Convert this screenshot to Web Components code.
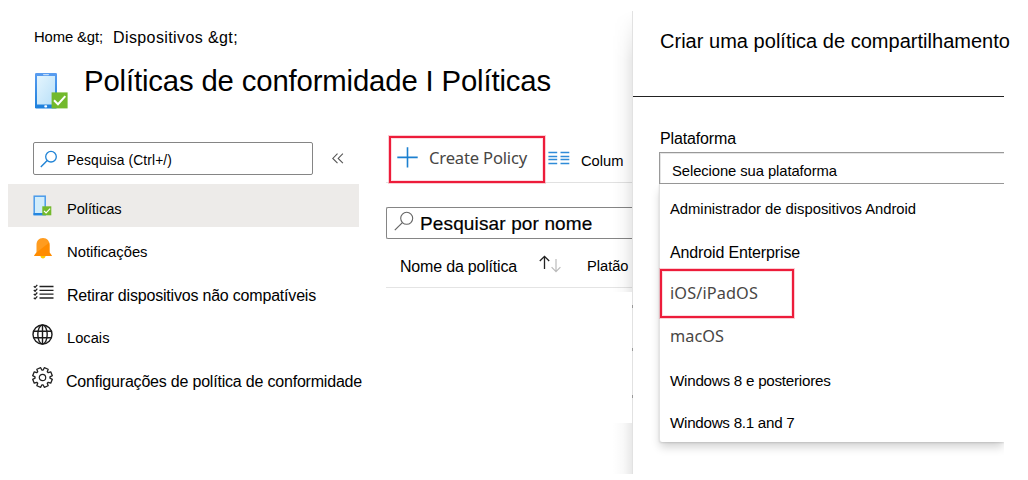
<!DOCTYPE html>
<html lang="pt">
<head>
<meta charset="utf-8">
<title>Políticas de conformidade</title>
<style>
html,body{margin:0;background:#fff}
body{width:1028px;height:480px;overflow:hidden;font-family:"Liberation Sans",Arial,sans-serif;color:#000}
</style>
</head>
<body>
<policy-page></policy-page>
<script>
const define = (name, html, setup) => customElements.define(name, class extends HTMLElement {
  connectedCallback() {
    if (this.shadowRoot) return;
    this.attachShadow({mode: 'open'}).innerHTML = html;
    if (setup) setup(this, this.shadowRoot);
  }
});

/* One line of text, tracked to a given width. */
define('fit-text', `<style>
:host{display:block;flex:none;height:20px;line-height:20px;white-space:pre}
:host([ui]){font-family:"Noto Sans","Open Sans",sans-serif;color:#484644}
span{display:inline-block}
</style><span><slot></slot></span>`, (el, root) => {
  const span = root.querySelector('span');
  el.style.fontSize = el.getAttribute('size') + 'px';
  const want = parseFloat(el.getAttribute('width'));
  const natural = span.getBoundingClientRect().width;
  span.style.letterSpacing = (want - natural) / el.textContent.length + 'px';
  el.style.width = want + 'px';
});

const gear = (() => {
  let d = '';
  const pt = (r, a) => (10.5 + r * Math.cos(a)).toFixed(2) + ' ' + (10.5 + r * Math.sin(a)).toFixed(2);
  for (let i = 0; i < 8; i++) {
    const a = i * Math.PI / 4 - Math.PI / 8;
    d += (i ? 'L' : 'M') + pt(7.5, a - .3) + 'L' + pt(10, a - .21) + 'L' + pt(10, a + .21) + 'L' + pt(7.5, a + .3);
  }
  return d + 'Z';
})();

const icons = {
  phone: [34, 38, `<defs><linearGradient id="a" x1="0" y1="0" x2="0" y2="1"><stop offset="0" stop-color="#5a9df0"/><stop offset="1" stop-color="#1c80dc"/></linearGradient><linearGradient id="b" x1="0" y1="0" x2="1" y2="1"><stop offset="0" stop-color="#e4f5fe"/><stop offset="1" stop-color="#b9e0f8"/></linearGradient></defs>
   <rect x="1" y="1" width="22" height="35.5" rx="1.2" fill="url(#a)"/><rect x="3" y="4" width="18" height="28.5" fill="url(#b)"/><rect x="9" y="2" width="6" height="1.2" rx=".6" fill="#c3dcf8"/><rect x="10.3" y="33.3" width="2.8" height="2.2" rx=".8" fill="#fff"/>
   <rect x="17.6" y="20.4" width="16" height="16" fill="#73b92c"/><path d="M20 28.2l4 4 7.3-8" fill="none" stroke="#fff" stroke-width="2"/>`],
  phoneSmall: [19, 21, `<rect x="1.2" y="1.2" width="11" height="18.6" fill="#d2edfb" stroke="#4a9bea" stroke-width="1.5"/><path d="M.5 19h12" stroke="#2586df" stroke-width="2"/><rect x="9.3" y="11.3" width="9" height="9" fill="#73b92c"/><path d="M11 15.8l2.1 2.2 4-4.3" fill="none" stroke="#fff" stroke-width="1.2"/>`],
  bell: [19, 21, `<path d="M6.4 17.5h5.2c0 4-5.2 4-5.2 0z" fill="#ffca00"/><path d="M9 0C4.700 0 2.500 3 2.500 7v7.500L.4 17.300v.7h17.200v-.7L15.500 14.500V7C15.500 3 13.300 0 9 0z" fill="#ff9c1f"/><path d="M15.300 4.500L2.500 14.500.4 17.300v.7h17.200v-.7L15.500 14.500V7z" fill="#ff8c00"/>`],
  list: [21, 17, `<path d="M6.500 2.500H20.500M6.500 6.300H20.500M6.500 10.200H20.500M6.500 14H20.500" stroke="#222" stroke-width="1.300"/><path d="M.8 2.200l1.300 1.200L4.300.8M.8 6l1.300 1.200 2.200-2.600M.8 9.900l1.300 1.200 2.200-2.600M.8 13.700l1.300 1.200 2.200-2.600" fill="none" stroke="#222" stroke-width="1.300"/>`],
  globe: [21, 21, `<g fill="none" stroke="#1b1b1b" stroke-width="1.400"><circle cx="10.500" cy="10.500" r="9.500"/><ellipse cx="10.500" cy="10.500" rx="4.700" ry="9.500"/><path d="M10.500 1v19M1.800 7.300h17.400M1.800 13.700h17.400"/></g>`],
  gear: [21, 21, `<path d="${gear}" fill="none" stroke="#222" stroke-width="1.300" stroke-linejoin="round"/><circle cx="10.500" cy="10.500" r="3.200" fill="none" stroke="#222" stroke-width="1.200"/>`],
  search: [18, 18, `<circle cx="11" cy="6.700" r="5.300" fill="none" stroke="#1f83d6" stroke-width="1.300"/><path d="M7.200 10.500L.8 16.900" stroke="#1f83d6" stroke-width="1.400"/>`],
  searchGrey: [20, 20, `<circle cx="12.700" cy="7.300" r="6" fill="none" stroke="#666" stroke-width="1.100"/><path d="M8.400 11.600L.8 19.200" stroke="#666" stroke-width="1.200"/>`],
  collapse: [12, 11, `<path d="M5.500.7L.8 5.400l4.700 4.700M10.900.7L6.200 5.400l4.700 4.700" fill="none" stroke="#555" stroke-width="1.1"/>`],
  plus: [21, 21, `<path d="M10.500.3v20.200M.3 10.400h20.400" stroke="#1c80d0" stroke-width="1.600"/>`],
  columns: [22, 14, `<path d="M.4 1.500h8.800M12.500 1.500h8.800M.4 5.500h8.800M12.500 5.500h8.800M.4 8.500h8.800M12.500 8.500h8.800M.4 12.500h8.800M12.500 12.500h8.800" stroke="#2f8bd8" stroke-width="1.300"/>`],
  sort: [24, 18, `<path d="M6.500 14V1.500M1.800 6l4.700-4.700L11.200 6" fill="none" stroke="#222" stroke-width="1.300"/><path d="M18 4v12.500M13.600 12.200l4.400 4.400 4.400-4.400" fill="none" stroke="#bbb" stroke-width="1.200"/>`]
};
define('ui-icon', `<style>:host{display:block;flex:none}svg{display:block}</style>`, (el, root) => {
  const [w, h, body] = icons[el.getAttribute('name')];
  root.innerHTML += `<svg width="${w}" height="${h}" viewBox="0 0 ${w} ${h}">${body}</svg>`;
});

define('page-header', `<style>
:host{display:block;height:142px}
.crumbs{display:flex;padding:27px 0 0 34px;height:20px;gap:10px}
.title{display:flex;padding:24px 0 0 34px}
</style>
<div class="crumbs"><fit-text size="14.8" width="69">Home &amp;gt;</fit-text><fit-text size="16" width="125" style="margin-top:1px">Dispositivos &amp;gt;</fit-text></div>
<div class="title"><ui-icon name="phone" style="margin-top:1px"></ui-icon><fit-text size="29.3" width="467" style="margin:0 0 0 16px">Políticas de conformidade I Políticas</fit-text></div>`);

define('nav-search', `<style>
:host{display:flex;height:42px;padding-left:25px}
.box{box-sizing:border-box;width:280px;height:33px;border:1px solid #858585;border-radius:2px;display:flex;padding:7px 0 0 7px}
</style><div class="box"><ui-icon name="search" style="margin-left:-1px"></ui-icon><fit-text size="13.8" width="105" style="margin:1px 0 0 9px">Pesquisa (Ctrl+/)</fit-text></div><ui-icon name="collapse" style="margin:11px 0 0 19px"></ui-icon>`);

define('nav-item', `<style>
:host{display:flex;box-sizing:border-box;height:43px;padding-left:25px}
:host([selected]){background:#edebe9}
.icon{width:34px;flex:none}
</style><div class="icon"><slot name="icon"></slot></div><slot></slot>`);

define('side-nav', `<style>:host{display:block;width:351px}</style>
<nav-search></nav-search>
<nav-item selected><ui-icon slot="icon" name="phoneSmall" style="margin-top:11px"></ui-icon><fit-text size="14.7" width="54.500" style="margin-top:15px">Políticas</fit-text></nav-item>
<nav-item><ui-icon slot="icon" name="bell" style="margin:11px 0 0 1px"></ui-icon><fit-text size="14.8" width="80.500" style="margin-top:15px">Notificações</fit-text></nav-item>
<nav-item><ui-icon slot="icon" name="list" style="margin-top:14px"></ui-icon><fit-text size="16" width="249" style="margin-top:16px">Retirar dispositivos não compatíveis</fit-text></nav-item>
<nav-item><ui-icon slot="icon" name="globe" style="margin:11px 0 0 -1px"></ui-icon><fit-text size="14.7" width="42.500" style="margin-top:15px">Locais</fit-text></nav-item>
<nav-item><ui-icon slot="icon" name="gear" style="margin:11px 0 0 -1px"></ui-icon><fit-text size="16" width="296" style="margin:16px 0 0 -1px">Configurações de política de conformidade</fit-text></nav-item>`);

define('policy-list', `<style>
:host{display:block;width:247px}
.tools{display:flex;border-bottom:1px solid #e1e1e1;box-sizing:border-box;height:41px}
.create{box-sizing:border-box;width:156px;height:47px;margin:-6px 0 0 3px;border:2px solid #ed1c3a;box-shadow:0 0 0 1px rgba(237,28,58,.22),inset 0 0 0 1px rgba(237,28,58,.15);background:#fff;display:flex;padding:9px 0 0 6px;position:relative}
.filter{box-sizing:border-box;height:32px;margin-top:24px;border:1px solid #858585;border-right:0;border-radius:2px 0 0 2px;display:flex;padding:3px 0 0 7px}
.head{display:flex;height:48px;border-bottom:1px solid #e4e4e4}
</style>
<div class="tools"><div class="create"><ui-icon name="plus"></ui-icon><fit-text ui size="16.6" width="98" style="margin:1px 0 0 11px">Create Policy</fit-text></div>
<ui-icon name="columns" style="margin:9px 0 0 3px"></ui-icon><fit-text size="14.7" width="42.500" style="margin:9px 0 0 11px">Colum</fit-text></div>
<div class="filter"><ui-icon name="searchGrey"></ui-icon><fit-text size="19" width="172.500" style="margin:3px 0 0 6px;-webkit-text-stroke:.2px #000">Pesquisar por nome</fit-text></div>
<div class="head"><fit-text size="16" width="117" style="margin:18px 0 0 14px">Nome da política</fit-text><ui-icon name="sort" style="margin:16px 0 0 21px"></ui-icon><fit-text size="14.700" width="41.500" style="margin:17px 0 0 25px">Platão</fit-text></div>`);

define('platform-menu', `<style>
:host{display:block;box-sizing:border-box;width:345px;height:258px;padding:15px 0 0 10px;border-left:1px solid #e3e3e3;border-radius:0 0 0 3px;box-shadow:0 6px 10px -1px rgba(0,0,0,.18),0 1px 2px rgba(0,0,0,.12);background:#fff}
.marked{box-sizing:border-box;width:134px;height:49px;margin:6px 0 0 -10px;border:2px solid #ed1c3a;box-shadow:0 0 0 1px rgba(237,28,58,.22),inset 0 0 0 1px rgba(237,28,58,.15);padding:12px 0 0 8px}
</style>
<fit-text size="14.8" width="246">Administrador de dispositivos Android</fit-text>
<fit-text size="16" width="130" style="margin-top:24px">Android Enterprise</fit-text>
<div class="marked"><fit-text ui size="16.300" width="88">iOS/iPadOS</fit-text></div>
<fit-text ui size="16.300" width="54" style="margin-top:8px">macOS</fit-text>
<fit-text size="15.2" width="160.500" style="margin-top:25px">Windows 8 e posteriores</fit-text>
<fit-text size="15.2" width="124.500" style="margin-top:22px">Windows 8.1 and 7</fit-text>`);

define('create-panel', `<style>
:host{display:block;position:relative;width:371px;height:463px;margin-top:11px;border-left:1px solid #e2e2e2;background:#fff}
.shade{position:absolute;left:-21px;width:20px;background:linear-gradient(90deg,rgba(0,0,0,0),rgba(0,0,0,.025) 55%,rgba(0,0,0,.085))}
.one{top:0;height:281px;-webkit-mask:linear-gradient(transparent,#000 50px)}.two{top:412px;height:51px}
.row{position:absolute;left:-1px;width:1px;height:3px;background:#999}
.heading{border-bottom:1px solid #222;box-sizing:border-box;height:86px;padding:20px 0 0 27px}
.field{padding:32px 0 0 27px}
.clip{width:371px;height:310px;margin-top:3px;padding:0 0 0 26px;box-sizing:border-box;clip-path:inset(0 0 0 0)}
.select{box-sizing:border-box;width:345px;height:32px;border:1px solid #999;border-right:0;box-shadow:inset 1px 1px 0 rgba(0,0,0,.1);padding:8px 0 0 12px}
</style>
<div class="shade one"></div><div class="shade two"></div>
<div class="row" style="top:294px"></div><div class="row" style="top:337px"></div><div class="row" style="top:384px"></div>
<div class="heading"><fit-text size="20" width="350">Criar uma política de compartilhamento</fit-text></div>
<div class="field"><fit-text size="16" width="76">Plataforma</fit-text></div>
<div class="clip"><div class="select"><fit-text size="14.8" width="165">Selecione sua plataforma</fit-text></div><platform-menu></platform-menu></div>`);

define('policy-page', `<style>
:host{display:flex;width:1028px;height:480px}
.main{width:632px;flex:none}
.body{display:flex;padding-left:8px;gap:27px}
</style>
<div class="main"><page-header></page-header><div class="body"><side-nav></side-nav><policy-list></policy-list></div></div><create-panel></create-panel>`);
</script>
</body>
</html>
